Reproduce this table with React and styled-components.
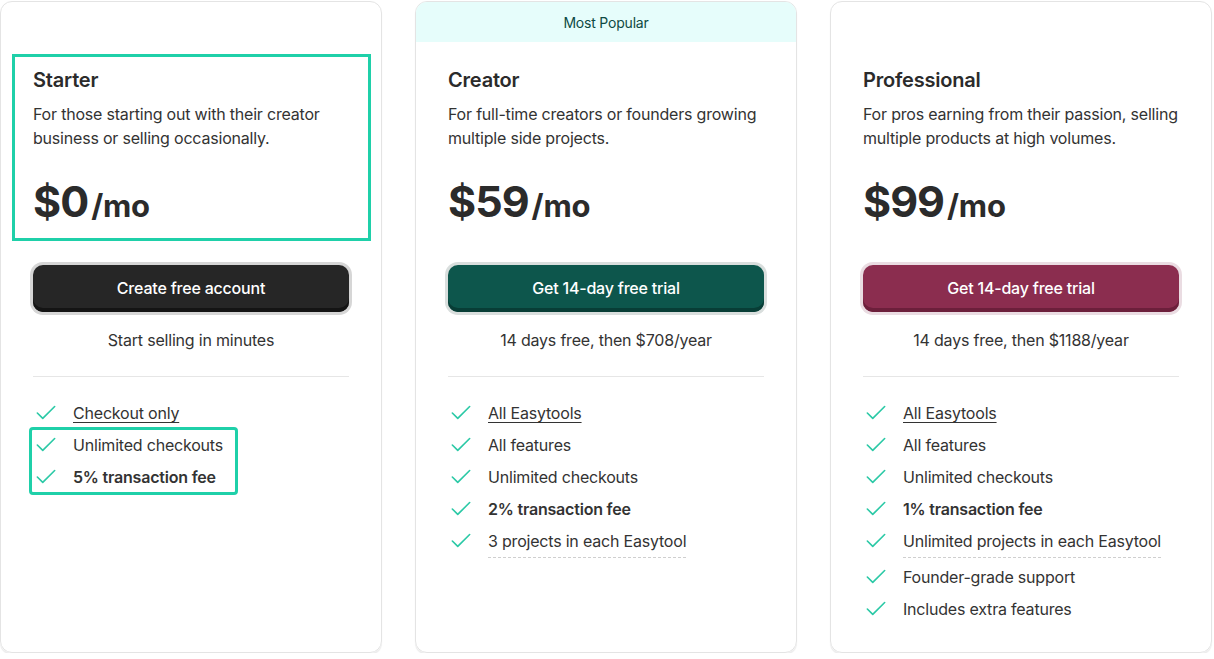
import React from "react";
import styled, { createGlobalStyle, css } from "styled-components";

const GlobalStyle = createGlobalStyle`
  body {
    margin: 0;
    background: #fff;
    font-family: Inter, "Noto Sans", sans-serif;
    color: #2b2b2b;
    letter-spacing: -0.2px;
  }
`;

const plans = [
  {
    name: "Starter",
    desc: "For those starting out with their creator business or selling occasionally.",
    price: "$0",
    cta: "Create free account",
    note: "Start selling in minutes",
    tone: "dark",
    highlightHead: true,
    features: [
      { text: "Checkout only", link: true },
      { text: "Unlimited checkouts", mark: true },
      { text: "5% transaction fee", bold: true, mark: true },
    ],
  },
  {
    name: "Creator",
    desc: "For full-time creators or founders growing multiple side projects.",
    price: "$59",
    cta: "Get 14-day free trial",
    note: "14 days free, then $708/year",
    tone: "teal",
    popular: true,
    features: [
      { text: "All Easytools", link: true },
      { text: "All features" },
      { text: "Unlimited checkouts" },
      { text: "2% transaction fee", bold: true },
      { text: "3 projects in each Easytool", dashed: true },
    ],
  },
  {
    name: "Professional",
    desc: "For pros earning from their passion, selling multiple products at high volumes.",
    price: "$99",
    cta: "Get 14-day free trial",
    note: "14 days free, then $1188/year",
    tone: "wine",
    features: [
      { text: "All Easytools", link: true },
      { text: "All features" },
      { text: "Unlimited checkouts" },
      { text: "1% transaction fee", bold: true },
      { text: "Unlimited projects in each Easytool", dashed: true },
      { text: "Founder-grade support" },
      { text: "Includes extra features" },
    ],
  },
];

const tones = {
  dark: { bg: "#262626", edge: "#141414", ring: "#d6d6d6" },
  teal: { bg: "#0d564c", edge: "#083d36", ring: "#d9dedd" },
  wine: { bg: "#8b2d4f", edge: "#6c1f3b", ring: "#eadce2" },
};

const Row = styled.div`
  display: flex;
  gap: 33px;
  padding-top: 1px;
  width: 1214px;
  box-sizing: border-box;
`;

const Card = styled.section`
  width: 382px;
  height: 652px;
  box-sizing: border-box;
  border: 1px solid #e4e4e4;
  border-radius: 12px;
  box-shadow: 0 2px 1px #ececec;
  overflow: hidden;
  display: flex;
  flex-direction: column;
`;

const Banner = styled.div`
  height: 40px;
  flex: none;
  display: flex;
  align-items: center;
  justify-content: center;
  font-size: 14px;
  color: #0e4a43;
  background: ${(p) => (p.$show ? "#e6fdfb" : "transparent")};
`;

const Body = styled.div`
  padding: 24px 32px 0;
  display: flex;
  flex-direction: column;
`;

const Head = styled.div`
  position: relative;
  ${(p) =>
    p.$mark &&
    css`
      &::before {
        content: "";
        position: absolute;
        top: -12px;
        bottom: -14px;
        left: -21px;
        right: -22px;
        border: 3px solid #1fd0a9;
        pointer-events: none;
      }
    `}
`;

const Title = styled.h3`
  margin: 0;
  font-size: 20px;
  font-weight: 600;
  line-height: 28px;
  color: #2b2b2b;
`;

const Desc = styled.p`
  margin: 8px 0 0;
  font-size: 16px;
  line-height: 24px;
  color: #333;
`;

const Price = styled.div`
  margin-top: 25px;
  height: 52px;
  line-height: 52px;
  color: #2b2b2b;
  font-weight: 700;
  white-space: nowrap;
`;

const Amount = styled.span`
  font-size: 43px;
  letter-spacing: -1px;
`;

const Per = styled.span`
  font-size: 31px;
  margin-left: 3px;
`;

const Ring = styled.div`
  margin-top: 35px;
  margin-left: -3px;
  margin-right: -3px;
  padding: 3px;
  border-radius: 13px;
  background: ${(p) => tones[p.$tone].ring};
`;

const Button = styled.button`
  width: 100%;
  height: 47px;
  border: 0;
  border-radius: 10px;
  background: ${(p) => tones[p.$tone].bg};
  box-shadow: inset 0 -4px 0 ${(p) => tones[p.$tone].edge};
  color: #fff;
  font-family: inherit;
  font-size: 16px;
  font-weight: 500;
  letter-spacing: -0.2px;
  padding-bottom: 3px;
  cursor: pointer;
`;

const Note = styled.p`
  margin: 13px 0 0;
  text-align: center;
  font-size: 16px;
  line-height: 24px;
  color: #333;
`;

const Divider = styled.hr`
  margin: 24px 0 20px;
  border: 0;
  border-top: 1px solid #e6e6e6;
`;

const List = styled.ul`
  list-style: none;
  margin: 0;
  padding: 0;
`;

const MarkGroup = styled.div`
  outline: 3px solid #1fd0a9;
  outline-offset: -1px;
  margin-left: -2px;
  width: 205px;
  padding-left: 2px;
  box-sizing: border-box;
  border-radius: 2px;
`;

const Item = styled.li`
  display: flex;
  align-items: center;
  gap: 14px;
  height: 32px;
  font-size: 16px;
  line-height: 24px;
  color: #333;
  ${(p) =>
    p.$dashed &&
    css`
      height: 36px;
      align-items: flex-start;
      padding-top: 4px;
      box-sizing: border-box;
    `}
`;

const IconBox = styled.span`
  display: flex;
  align-items: center;
  height: 24px;
  flex: none;
`;

const Label = styled.span`
  font-weight: ${(p) => (p.$bold ? 600 : 400)};
  ${(p) => p.$link && css`text-decoration: underline; text-underline-offset: 3px;`}
  ${(p) => p.$dashed && css`padding-bottom: 4px; border-bottom: 1px dashed #cfcfcf;`}
`;

const Check = () => (
  <IconBox>
    <svg width="26" height="26" viewBox="0 0 24 24" fill="none" stroke="#2bc9a6" strokeWidth="1.5" strokeLinecap="round" strokeLinejoin="round">
      <path d="M20 6 9 17l-5-5" />
    </svg>
  </IconBox>
);

const Feature = ({ f }) => (
  <Item $dashed={f.dashed}>
    <Check />
    <Label $bold={f.bold} $link={f.link} $dashed={f.dashed}>
      {f.text}
    </Label>
  </Item>
);

const Plan = ({ plan }) => {
  const marked = plan.features.filter((f) => f.mark);
  const plain = plan.features.filter((f) => !f.mark);
  return (
    <Card>
      <Banner $show={plan.popular}>{plan.popular && "Most Popular"}</Banner>
      <Body>
        <Head $mark={plan.highlightHead}>
          <Title>{plan.name}</Title>
          <Desc>{plan.desc}</Desc>
          <Price>
            <Amount>{plan.price}</Amount>
            <Per>/mo</Per>
          </Price>
        </Head>
        <Ring $tone={plan.tone}>
          <Button $tone={plan.tone}>{plan.cta}</Button>
        </Ring>
        <Note>{plan.note}</Note>
        <Divider />
        <List>
          {plain.map((f) => (
            <Feature key={f.text} f={f} />
          ))}
          {marked.length > 0 && (
            <MarkGroup>
              {marked.map((f) => (
                <Feature key={f.text} f={f} />
              ))}
            </MarkGroup>
          )}
        </List>
      </Body>
    </Card>
  );
};

export default function App() {
  return (
    <>
      <GlobalStyle />
      <Row>
        {plans.map((p) => (
          <Plan key={p.name} plan={p} />
        ))}
      </Row>
    </>
  );
}
